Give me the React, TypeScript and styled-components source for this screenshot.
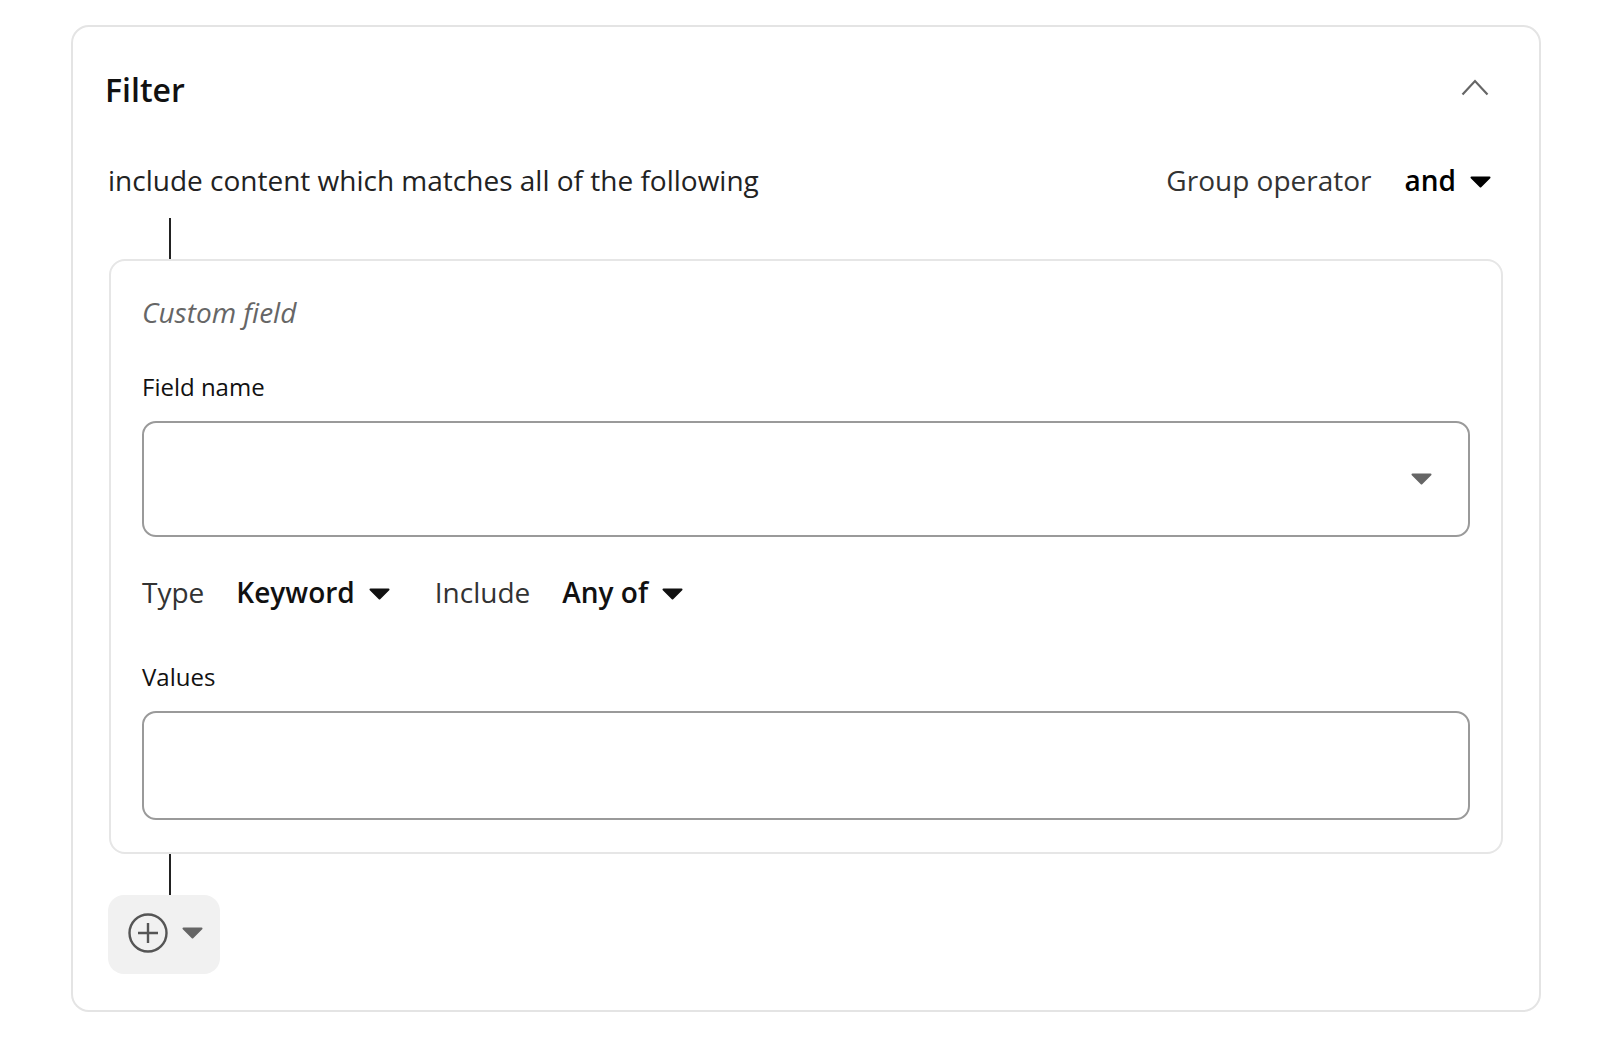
import React from 'react';
import styled, { createGlobalStyle } from 'styled-components';

const GlobalStyle = createGlobalStyle`
  html, body {
    margin: 0;
    padding: 0;
    background: #ffffff;
  }
  body {
    font-family: "Open Sans", "Noto Sans", "Liberation Sans", sans-serif;
    color: #222;
  }
`;

const Page = styled.div`
  padding: 25px 71px 27px 71px;
`;

const FilterCard = styled.section`
  border: 2px solid #e4e4e4;
  border-radius: 18px;
  padding: 0 36px 36px;
`;

const Header = styled.div`
  display: flex;
  align-items: center;
  justify-content: space-between;
  height: 126px;
  margin-left: -4px;
  padding-right: 14px;
`;

const Title = styled.h2`
  margin: 0;
  font-size: 32px;
  font-weight: 600;
  color: #111;
  line-height: 40px;
`;

const IconButton = styled.button`
  border: none;
  background: none;
  padding: 0;
  margin-top: -6px;
  display: flex;
  cursor: pointer;
`;

const CriteriaRow = styled.div`
  display: flex;
  align-items: center;
  justify-content: space-between;
  height: 38px;
  margin-top: 8px;
  margin-left: -1px;
  padding-right: 12px;
`;

const Text = styled.span<{ $tone?: string; $bold?: boolean }>`
  font-size: 28px;
  line-height: 38px;
  color: ${(p) => p.$tone ?? '#222'};
  font-weight: ${(p) => (p.$bold ? 600 : 400)};
  white-space: nowrap;
`;

const Operator = styled.div`
  display: flex;
  align-items: center;
`;

const Select = styled.button<{ $gap: number }>`
  display: flex;
  align-items: center;
  gap: 14px;
  margin-left: ${(p) => p.$gap}px;
  border: none;
  background: none;
  padding: 0;
  font-family: inherit;
  cursor: pointer;

  svg {
    margin-top: 4px;
  }
`;

const Connector = styled.div<{ $top?: number }>`
  width: 2px;
  height: 41px;
  margin-top: ${(p) => p.$top ?? 0}px;
  margin-left: 60px;
  background: #222;
`;

const RuleCard = styled.div`
  border: 2px solid #e6e6e6;
  border-radius: 16px;
  padding: 32px 31px 32px;
`;

const RuleKind = styled.div`
  font-size: 28px;
  line-height: 38px;
  font-style: italic;
  color: #666;
`;

const Label = styled.label<{ $top: number }>`
  display: block;
  margin-top: ${(p) => p.$top}px;
  font-size: 24px;
  line-height: 32px;
  color: #111;
`;

const Field = styled.div<{ $height: number }>`
  display: flex;
  align-items: center;
  justify-content: flex-end;
  height: ${(p) => p.$height}px;
  margin-top: 18px;
  box-sizing: border-box;
  border: 2px solid #9a9a9a;
  border-radius: 14px;
  padding-right: 36px;
`;

const OptionsRow = styled.div`
  display: flex;
  align-items: center;
  height: 38px;
  margin-top: 36px;
`;

const Spacer = styled.span<{ $w: number }>`
  display: inline-block;
  width: ${(p) => p.$w}px;
`;

const AddButton = styled.button`
  display: flex;
  align-items: center;
  gap: 14px;
  height: 79px;
  width: 112px;
  margin-left: -1px;
  padding: 0 0 4px 20px;
  border: none;
  border-radius: 16px;
  background: #f1f1f1;
  cursor: pointer;
`;

const Caret = ({ color = '#111' }: { color?: string }) => (
  <svg width={21} height={12} viewBox="0 0 21 12">
    <path d="M1.5 1.5 L19.5 1.5 L10.5 10.5 Z" fill={color} stroke={color} strokeWidth={2} strokeLinejoin="round" />
  </svg>
);

const ChevronUp = () => (
  <svg width={28} height={18} viewBox="0 0 28 18">
    <polyline points="1.5,16.5 14,3 26.5,16.5" fill="none" stroke="#666" strokeWidth={2.2} />
  </svg>
);

const PlusCircle = () => (
  <svg width={40} height={40} viewBox="0 0 40 40">
    <circle cx={20} cy={20} r={18.5} fill="none" stroke="#555" strokeWidth={2.4} />
    <path d="M20 10 V30 M10 20 H30" stroke="#555" strokeWidth={2.4} />
  </svg>
);

const App: React.FC = () => {
  return (
    <>
      <GlobalStyle />
      <Page>
        <FilterCard>
          <Header>
            <Title>Filter</Title>
            <IconButton aria-label="Collapse">
              <ChevronUp />
            </IconButton>
          </Header>

          <CriteriaRow>
            <Text>include content which matches all of the following</Text>
            <Operator>
              <Text $tone="#333">Group operator</Text>
              <Select $gap={33}>
                <Text $bold $tone="#000">and</Text>
                <Caret color="#000" />
              </Select>
            </Operator>
          </CriteriaRow>

          <Connector $top={19} />

          <RuleCard>
            <RuleKind>Custom field</RuleKind>

            <Label $top={40}>Field name</Label>
            <Field $height={116}>
              <Caret color="#666" />
            </Field>

            <OptionsRow>
              <Text $tone="#333">Type</Text>
              <Select $gap={32}>
                <Text $bold $tone="#111">Keyword</Text>
                <Caret />
              </Select>
              <Spacer $w={45} />
              <Text $tone="#333">Include</Text>
              <Select $gap={32}>
                <Text $bold $tone="#111">Any of</Text>
                <Caret />
              </Select>
            </OptionsRow>

            <Label $top={50}>Values</Label>
            <Field $height={109} />
          </RuleCard>

          <Connector />

          <AddButton aria-label="Add condition">
            <PlusCircle />
            <Caret color="#666" />
          </AddButton>
        </FilterCard>
      </Page>
    </>
  );
};

export default App;
